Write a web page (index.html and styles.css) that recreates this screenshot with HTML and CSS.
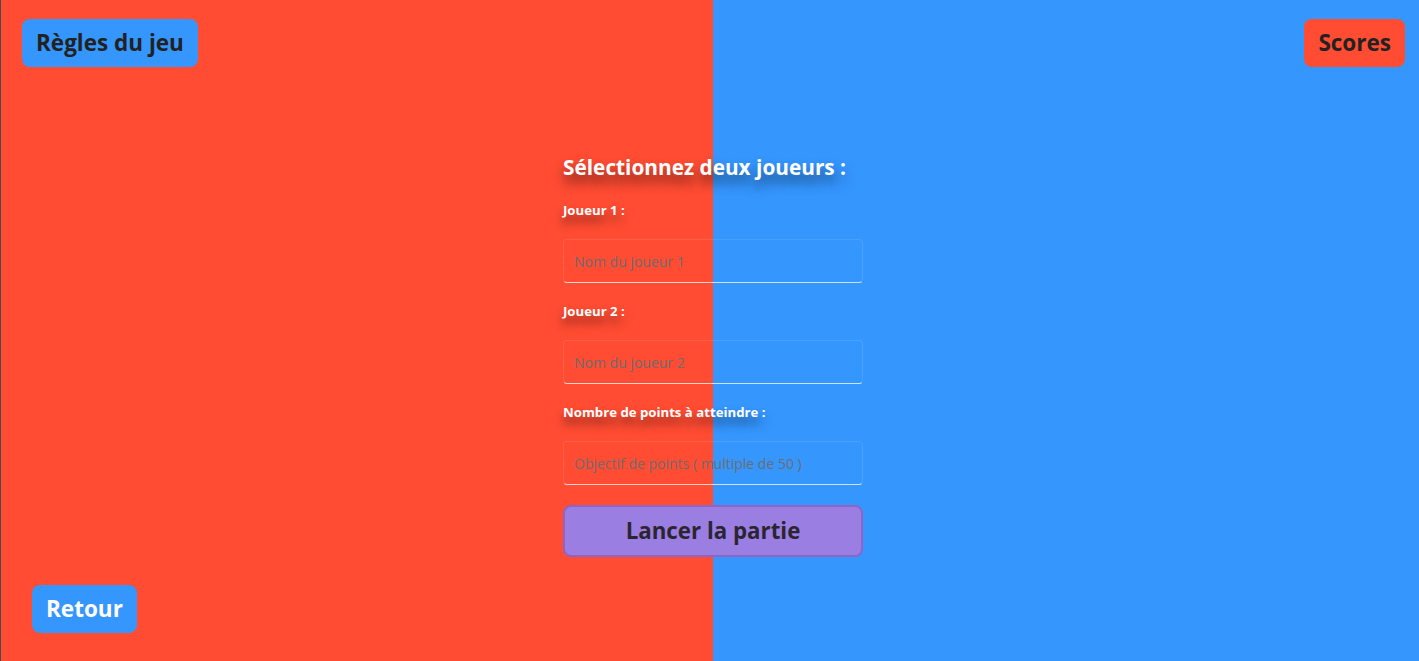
FILE: index.html
```html
<!DOCTYPE html>
<html lang="fr">
<head>
<meta charset="utf-8">
<title>Jeu</title>
<link rel="stylesheet" href="styles.css">
</head>
<body>
<div class="page">
  <header class="topbar">
    <button class="btn btn-blue btn-dark">Règles du jeu</button>
    <button class="btn btn-red btn-dark">Scores</button>
  </header>
  <main class="main">
    <form class="form">
      <h1 class="title">Sélectionnez deux joueurs :</h1>
      <label class="label label-first">Joueur 1 :</label>
      <input class="field" type="text" placeholder="Nom du joueur 1">
      <label class="label">Joueur 2 :</label>
      <input class="field" type="text" placeholder="Nom du joueur 2">
      <label class="label">Nombre de points à atteindre :</label>
      <input class="field" type="text" placeholder="Objectif de points ( multiple de 50 )">
      <button class="launch" type="button">Lancer la partie</button>
    </form>
  </main>
  <footer class="bottombar">
    <button class="btn btn-blue btn-light">Retour</button>
  </footer>
</div>
</body>
</html>
```

FILE: styles.css
```css
html, body {
  margin: 0;
  padding: 0;
  height: 100%;
}
body {
  background: linear-gradient(to right, #ff4c33 0, #ff4c33 713px, #3596fe 713px, #3596fe 100%);
  font-family: "Open Sans", "Noto Sans", sans-serif;
  overflow: hidden;
}
.page {
  height: 100vh;
  display: grid;
  grid-template-rows: auto 1fr auto;
  border-left: 1px solid #4a4a4a;
  box-sizing: border-box;
}
.topbar {
  display: flex;
  justify-content: space-between;
  padding: 19px 14px 0 21px;
}
.btn {
  border: none;
  border-radius: 8px;
  height: 48px;
  padding: 0 14px 2px;
  font-family: inherit;
  font-weight: 700;
  font-size: 22.5px;
  cursor: pointer;
}
.btn-blue { background: #3596fe; }
.btn-red { background: #ff4c33; }
.btn-dark { color: #222; }
.btn-light { color: #fff; }
.btn-back { padding: 0 13px 2px; }
.main {
  display: flex;
  justify-content: center;
  align-items: flex-start;
}
.form {
  width: 300px;
  margin-top: 88px;
  margin-left: 6px;
  display: flex;
  flex-direction: column;
}
.title {
  margin: 0;
  font-size: 20.8px;
  line-height: 24px;
  font-weight: 700;
  color: #fff;
  text-shadow: 0 8px 12px rgba(0,0,0,0.55);
}
.label {
  margin: 20px 0 21px;
  font-size: 13.2px;
  line-height: 16px;
  font-weight: 700;
  color: #fff;
  text-shadow: 0 7px 10px rgba(0,0,0,0.55);
}
.label-first { margin-top: 23px; }
.field {
  height: 44px;
  box-sizing: border-box;
  background: transparent;
  border: 1px solid rgba(255,255,255,0.1);
  border-bottom: 1px solid rgba(255,255,255,0.75);
  border-radius: 4px;
  padding: 0 10px;
  font-family: "Open Sans", sans-serif;
  font-size: 14px;
  color: #333;
  outline: none;
}
.field::placeholder { color: #6d6d6d; }
.launch {
  margin-top: 20px;
  height: 52px;
  padding-bottom: 2px;
  background: #9a7ee2;
  border: 2px solid #8f64c4;
  border-radius: 8px;
  font-family: inherit;
  font-weight: 700;
  font-size: 22.3px;
  color: #2a2530;
  cursor: pointer;
}
.bottombar {
  padding: 0 0 28px 31px;
}
```
